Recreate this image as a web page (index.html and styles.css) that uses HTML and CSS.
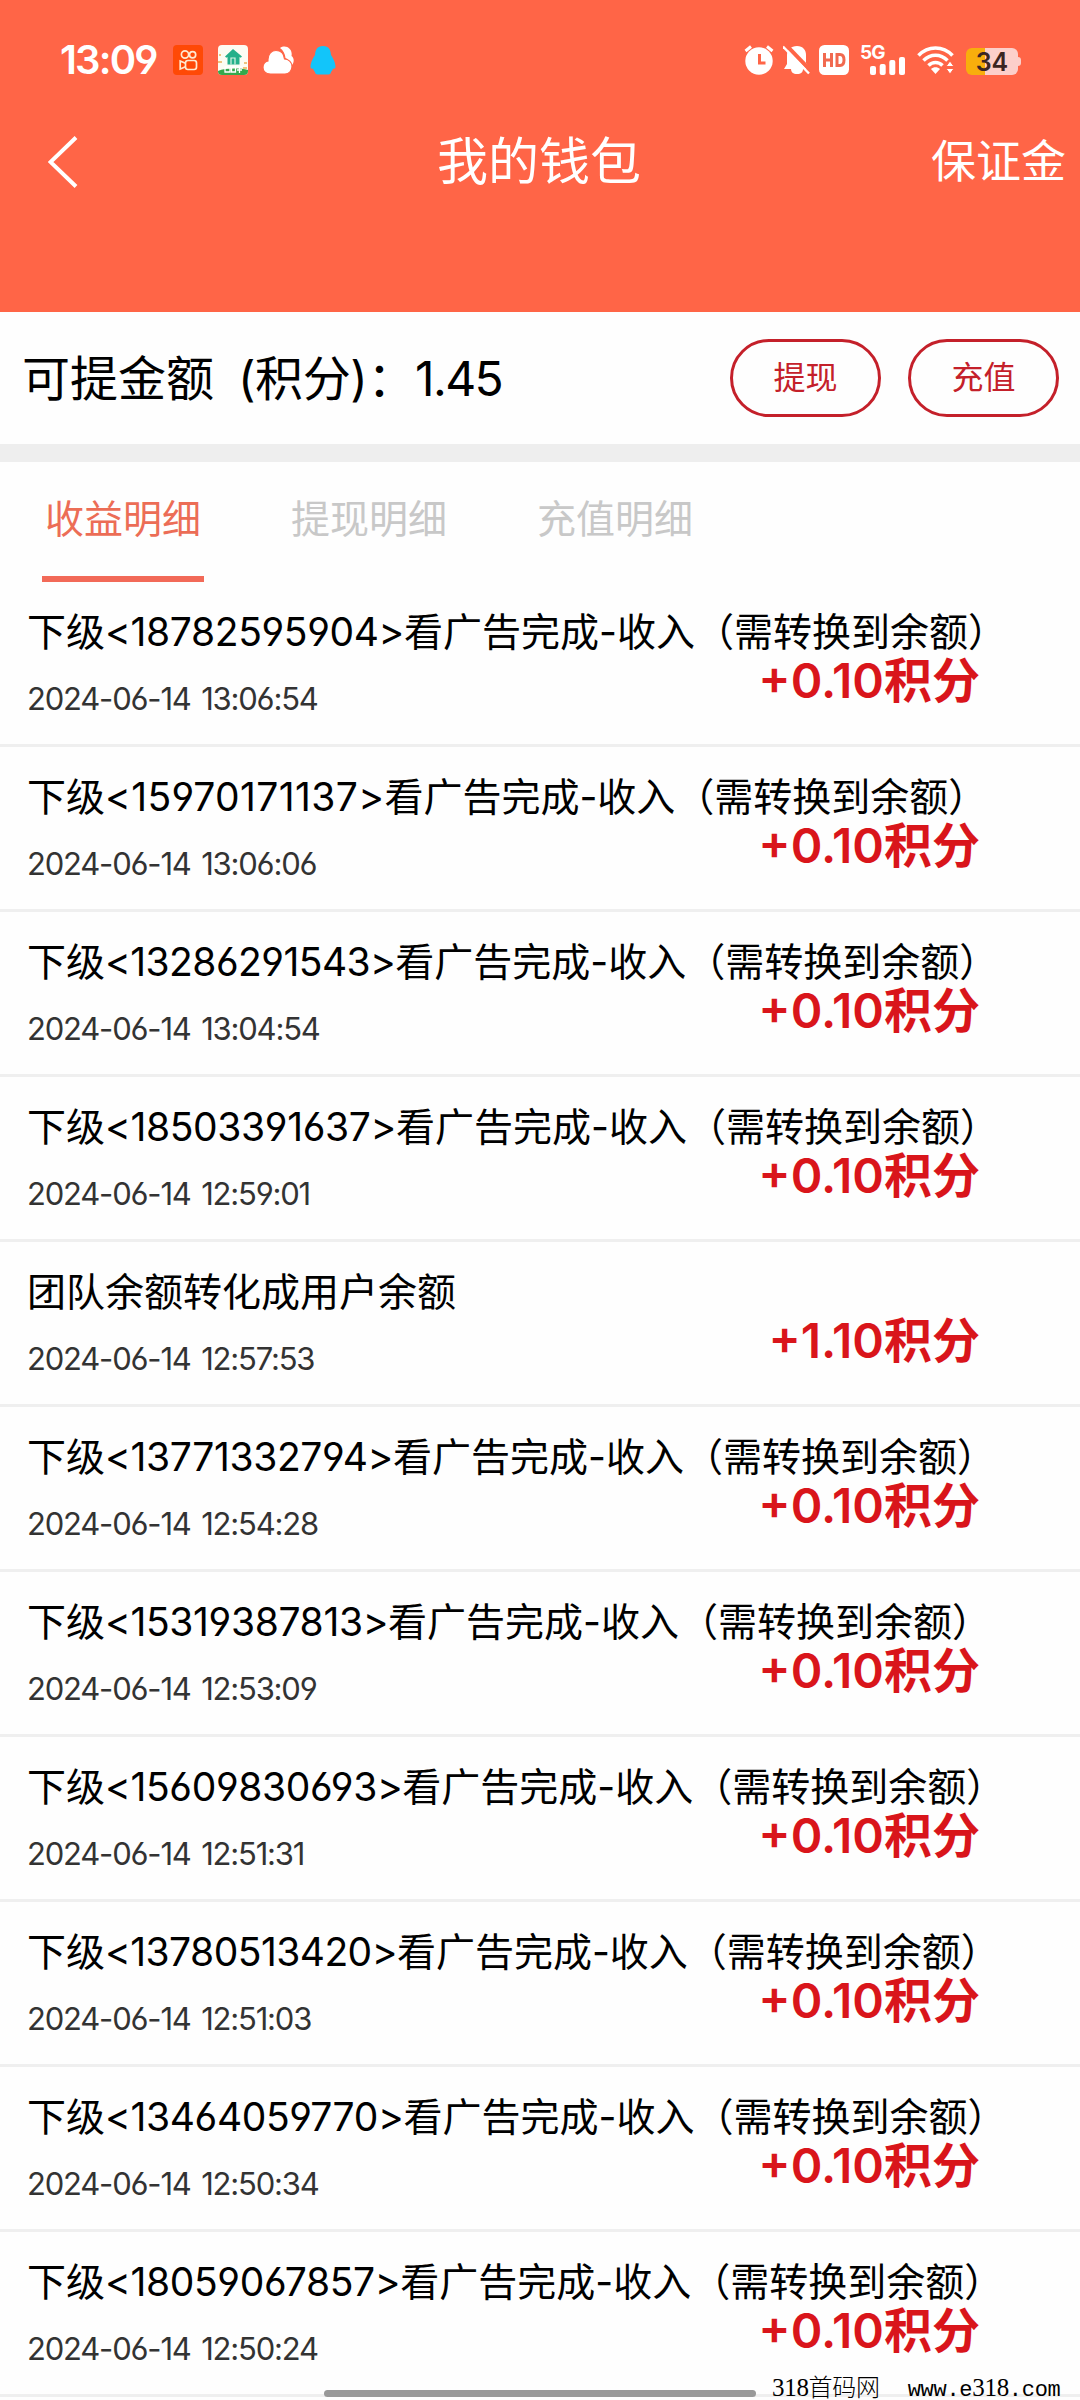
FILE: index.html
```html
<!DOCTYPE html>
<html lang="zh-CN">
<head>
<meta charset="utf-8">
<title>我的钱包</title>
<link rel="stylesheet" href="styles.css">
</head>
<body>
<header class="header">
  <div class="status">
    <div class="status-left">
      <span class="clock">13:09</span>
      <svg class="app-icon" viewBox="0 0 30 30"><rect width="30" height="30" rx="4" fill="#ff4906"/><g fill="none" stroke="#ffe9cf" stroke-width="1.7"><circle cx="12" cy="9.500" r="3.600"/><circle cx="19.600" cy="9.800" r="3.100"/><rect x="12.500" y="15.500" width="11" height="9" rx="2.400"/><path d="M12.500 18.300 7.200 16v8l5.300-2.300"/></g></svg>
      <svg class="app-icon" viewBox="0 0 30 30"><rect width="30" height="30" rx="4" fill="#fdfcf3"/><path d="M0 26c7-3 22-3 30-1v1a4 4 0 0 1-4 4H4a4 4 0 0 1-4-4z" fill="#35a84c"/><path d="M0 17h4M1 10h2M26 18h3M25 23h4" stroke="#efc37d" stroke-width="2"/><path d="M15 4 7 11.500l1.300 1.300L9.500 12v7.500h12V12l1.200.800 1.300-1.300z" fill="#25b08a"/><path d="M13 19.500V13h4v6.500" fill="none" stroke="#d9f4e5" stroke-width="1.200"/><path d="M7 22h5v5H7zM13.500 22h4v5h-4zM19 22h5M21.500 22v6M19 25h5" fill="none" stroke="#fff" stroke-width="1.300"/></svg>
      <svg class="cloud" viewBox="0 0 32 30"><path d="M17 3c6-4 13 1 11.500 8 3 2 3 7-.5 10-.2-4-2.500-7-5.500-8-.3-4-2.500-8-5.500-10z" fill="#fff"/><path d="M7.500 29C2 29 0 25.500 0 22.500 0 19 2.500 16.500 5 16 4.500 9 8.500 5.500 13 5.500c5 0 8 3.500 8.500 8.500 4 .3 7.500 3 7.500 7.500S26 29 22 29z" fill="#fff" stroke="#ff6547" stroke-width="1.200"/></svg>
      <svg class="qq" viewBox="0 0 26 30"><path d="M13 1C7 1 5.500 4.500 5 10c-2 3-4.500 8-4.500 11.500 0 2 1 2.500 2.500 2 .5 1.500 1 2.500 2 3.500 0 2 1.500 2.500 4 2.500h8c2.500 0 4-.5 4-2.500 1-1 1.500-2 2-3.500 1.500.5 2.500 0 2.500-2 0-3.500-2.500-8.500-4.500-11.500C20.500 4.500 19 1 13 1z" fill="#12c5fa"/></svg>
    </div>
    <div class="status-right">
      <svg class="alarm" viewBox="0 0 30 30"><circle cx="15" cy="16" r="13.700" fill="#fff"/><path d="M1.500 6 7 1.500M23 1.500 28.500 6" stroke="#fff" stroke-width="3"/><path d="M15.500 9v9h6" fill="none" stroke="#ff6547" stroke-width="3"/></svg>
      <svg class="bell" viewBox="0 0 28 30"><path d="M14 1c6 0 9 4 9 9v8l4 6H1l3-5v-9c0-5 4-9 10-9z" fill="#fff"/><path d="M8 24h12c0 3-2 5-6 5s-6-2-6-5z" fill="#fff"/><path d="m3 0 25 26" stroke="#ff6547" stroke-width="4"/><path d="m0 1.500 26 27" stroke="#fff" stroke-width="2.400"/></svg>
      <svg class="hd" viewBox="0 0 30 30"><rect width="30" height="30" rx="5.500" fill="#fff"/><path d="M5.500 8v14M12.500 8v14M5.500 15h7M18 9.500v11h3c3 0 4-2 4-5.500s-1-5.500-4-5.500z" fill="none" stroke="#f1694f" stroke-width="3"/></svg>
      <div class="signal"><span>5G</span><svg viewBox="0 0 35 18"><g fill="#fff"><rect x="0" y="9" width="6" height="9" rx="2"/><rect x="9.700" y="7" width="6" height="11" rx="2"/><rect x="19.300" y="3" width="6" height="15" rx="2"/><rect x="29" y="0" width="6" height="18" rx="2"/></g></svg></div>
      <svg class="wifi" viewBox="0 0 38 30"><g fill="none" stroke="#fff" stroke-width="3.600"><path d="M1.500 10.500C11 .5 26 .5 35.500 10.500"/><path d="M6.500 15.500c7-7 17-7 24 0"/><path d="M11.500 20.500c4-4 10-4 14 0"/></g><path d="M14 24c2.500-2.200 6.500-2.200 9 0L18.500 29z" fill="#fff"/><path d="M29 21.500 33 16l4 5.500zM29 23.500 33 29l4-5.500z" fill="#fff" stroke="#ff6547"/></svg>
      <div class="battery"><span>34</span></div>
    </div>
  </div>
  <nav class="nav">
    <svg class="back" viewBox="0 0 30 52"><path d="M28 1.500 2.500 26 28 50.500" fill="none" stroke="#fff" stroke-width="4"/></svg>
    <h1>我的钱包</h1>
    <span class="deposit">保证金</span>
  </nav>
</header>
<section class="balance">
  <div class="balance-text"><span>可提金额</span><span class="unit">(积分)：</span><span class="value">1.45</span></div>
  <div class="actions"><button>提现</button><button>充值</button></div>
</section>
<div class="tabs"><div class="tab active">收益明细</div><div class="tab">提现明细</div><div class="tab">充值明细</div></div>
<main class="list">
  <article class="row"><div><h2>下级<span class="phone">&lt;18782595904&gt;</span>看广告完成-收入（需转换到余额）</h2><time>2024-06-14 13:06:54</time></div><strong>+0.10积分</strong></article>
  <article class="row"><div><h2>下级<span class="phone loose">&lt;15970171137&gt;</span>看广告完成-收入（需转换到余额）</h2><time>2024-06-14 13:06:06</time></div><strong>+0.10积分</strong></article>
  <article class="row"><div><h2>下级<span class="phone tight">&lt;13286291543&gt;</span>看广告完成-收入（需转换到余额）</h2><time>2024-06-14 13:04:54</time></div><strong>+0.10积分</strong></article>
  <article class="row"><div><h2>下级<span class="phone">&lt;18503391637&gt;</span>看广告完成-收入（需转换到余额）</h2><time>2024-06-14 12:59:01</time></div><strong>+0.10积分</strong></article>
  <article class="row"><div><h2>团队余额转化成用户余额</h2><time>2024-06-14 12:57:53</time></div><strong>+1.10积分</strong></article>
  <article class="row"><div><h2>下级<span class="phone">&lt;13771332794&gt;</span>看广告完成-收入（需转换到余额）</h2><time>2024-06-14 12:54:28</time></div><strong>+0.10积分</strong></article>
  <article class="row"><div><h2>下级<span class="phone">&lt;15319387813&gt;</span>看广告完成-收入（需转换到余额）</h2><time>2024-06-14 12:53:09</time></div><strong>+0.10积分</strong></article>
  <article class="row"><div><h2>下级<span class="phone">&lt;15609830693&gt;</span>看广告完成-收入（需转换到余额）</h2><time>2024-06-14 12:51:31</time></div><strong>+0.10积分</strong></article>
  <article class="row"><div><h2>下级<span class="phone tight">&lt;13780513420&gt;</span>看广告完成-收入（需转换到余额）</h2><time>2024-06-14 12:51:03</time></div><strong>+0.10积分</strong></article>
  <article class="row"><div><h2>下级<span class="phone">&lt;13464059770&gt;</span>看广告完成-收入（需转换到余额）</h2><time>2024-06-14 12:50:34</time></div><strong>+0.10积分</strong></article>
  <article class="row"><div><h2>下级<span class="phone">&lt;18059067857&gt;</span>看广告完成-收入（需转换到余额）</h2><time>2024-06-14 12:50:24</time></div><strong>+0.10积分</strong></article>
</main>
<div class="home-bar"></div>
<div class="site-mark"><span class="site-name"><b>318</b>首码网</span><span>www.e<b>318</b>.com</span></div>
</body>
</html>
```
FILE: styles.css
```css
* { box-sizing: border-box; margin: 0; padding: 0; }
body {
  position: relative;
  width: 1080px;
  height: 2400px;
  overflow: hidden;
  background: #fefefe;
  color: #000;
  font-family: Inter, "Noto Sans CJK SC", sans-serif;
  font-feature-settings: "cv03", "cv04";
}
svg { display: block; flex: none; }
h1, h2 { font-weight: 400; white-space: nowrap; }

.header { height: 312px; background: #ff6547; color: #fff; }
.status { display: flex; justify-content: space-between; height: 120px; padding: 0 62px 0 60px; align-items: center; }
.status-left, .status-right { display: flex; align-items: center; }
.status-left { gap: 15px; }
.clock { width: 98px; font-size: 40px; font-weight: 600; line-height: 48px; letter-spacing: -1.8px; white-space: nowrap; }
.app-icon { width: 30px; height: 30px; }
.cloud { width: 32px; height: 30px; }
.qq { width: 26px; height: 30px; }
.alarm { width: 30px; height: 30px; margin-right: 9px; }
.bell { width: 28px; height: 30px; margin-right: 8px; }
.hd { width: 30px; height: 30px; margin-right: 11px; }
.signal { width: 45px; height: 30px; margin-right: 12px; display: grid; }
.signal span { grid-area: 1/1; font-size: 19px; font-weight: 700; line-height: 15px; letter-spacing: -1px; }
.signal svg { grid-area: 1/1; width: 35px; height: 18px; align-self: end; justify-self: end; }
.wifi { width: 38px; height: 30px; margin-right: 11px; }
.battery { width: 52px; height: 27px; margin-top: 3px; border-radius: 6px; background: linear-gradient(90deg, #f8ae0c 36%, #fccfca 36%); position: relative; text-align: center; color: #3b2521; font-size: 25px; font-weight: 600; line-height: 28px; }
.battery::after { content: ""; position: absolute; right: -3px; top: 9px; width: 3px; height: 9px; border-radius: 0 3px 3px 0; background: #fccfca; }

.nav { display: grid; grid-template-columns: 1fr auto 1fr; align-items: center; height: 84px; padding: 0 14px 0 48px; }
.back { width: 30px; height: 52px; }
.nav h1 { font-size: 51px; line-height: 60px; margin-left: -36px; }
.deposit { justify-self: end; font-size: 45px; line-height: 60px; white-space: nowrap; }

.balance { display: flex; justify-content: space-between; align-items: center; height: 150px; padding: 0 21px 0 22px; border-bottom: 18px solid #eee; }
.balance-text { display: flex; padding-top: 2px; font-size: 48px; line-height: 60px; white-space: nowrap; }
.unit { margin-left: 24px; letter-spacing: -0.4px; }
.value { letter-spacing: -1.6px; }
.actions { display: flex; gap: 27px; }
.actions button { width: 151px; height: 78px; border: 3px solid #c4202a; border-radius: 39px; background: none; color: #c4202a; font: inherit; font-size: 32px; line-height: 40px; }

.tabs { display: flex; height: 120px; padding-left: 42px; gap: 84px; color: #c8c8c8; font-size: 39px; line-height: 114px; }
.tab { width: 162px; text-align: center; white-space: nowrap; border-bottom: 6px solid transparent; }
.tab.active { color: #ec6d56; border-color: #f26a58; }

.row { display: grid; grid-template-columns: minmax(0, 1fr); height: 165px; padding: 28px 100px 0 27px; border-bottom: 3px solid #efefef; }
.row > * { grid-area: 1/1; }
.row h2 { font-size: 39px; line-height: 44px; }
.phone { letter-spacing: -0.35px; }
.phone.loose { letter-spacing: 0.4px; }
.phone.tight { letter-spacing: -0.55px; }
.row time { display: block; margin-top: 20px; color: #333; font-size: 31px; line-height: 50px; letter-spacing: -1.2px; word-spacing: 3px; white-space: nowrap; }
.row strong { justify-self: end; margin-top: 49px; color: #d9151b; font-size: 48px; font-weight: 600; line-height: 44px; white-space: nowrap; }

.home-bar { position: absolute; left: 324px; top: 2390px; width: 432px; height: 7px; border-radius: 4px; background: #999; }
.site-mark { position: absolute; left: 772px; top: 2374px; display: flex; gap: 28px; font: 22px/28px "Liberation Mono", "Noto Sans CJK SC", monospace; letter-spacing: -0.3px; white-space: nowrap; }
.site-name { font-size: 24px; font-weight: 300; }
.site-mark b { font-family: "Liberation Serif", serif; font-size: 25px; font-weight: 400; }
```
